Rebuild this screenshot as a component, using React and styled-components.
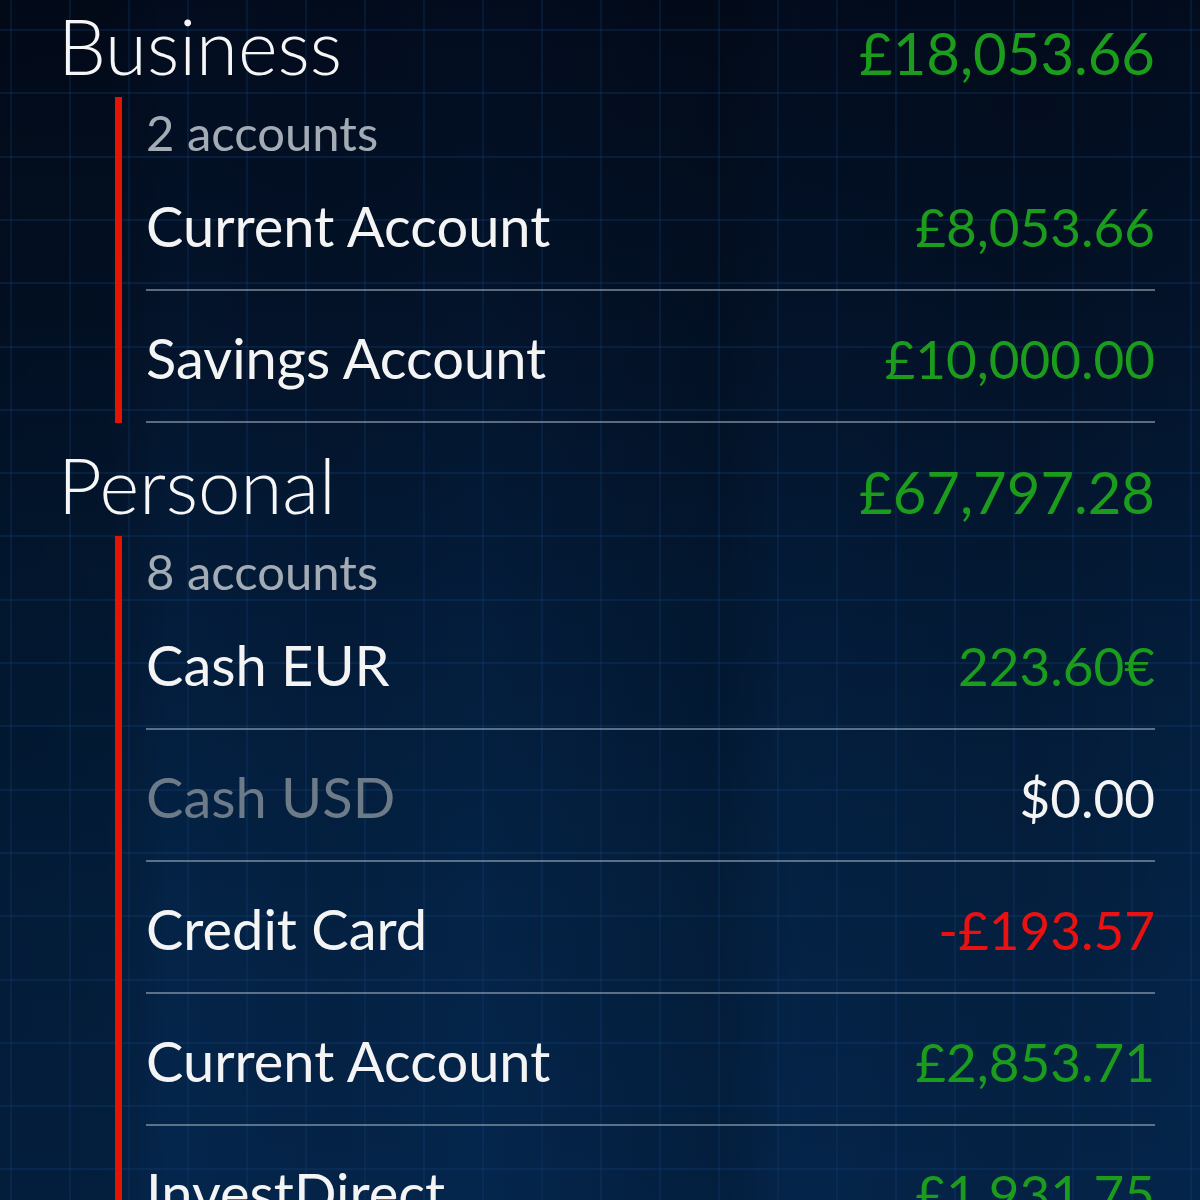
import styled, { createGlobalStyle } from 'styled-components';

const GlobalStyle = createGlobalStyle`
  html, body {
    margin: 0;
    padding: 0;
    height: 1200px;
    overflow: hidden;
  }

  body {
    font-family: Lato, "Open Sans", "DejaVu Sans", sans-serif;
    background-color: #031733;
    background-image:
      repeating-linear-gradient(90deg, transparent 0px, transparent 10px, rgba(18, 66, 124, 0.24) 10px, rgba(18, 66, 124, 0.24) 12px, transparent 12px, transparent 59px),
      repeating-linear-gradient(180deg, transparent 0px, transparent 29px, rgba(18, 66, 124, 0.28) 29px, rgba(18, 66, 124, 0.28) 31px, transparent 31px, transparent 63.3px),
      linear-gradient(90deg, rgba(0, 0, 0, 0.22) 0%, rgba(0, 0, 0, 0.2) 9%, rgba(0, 0, 0, 0) 14%, rgba(0, 0, 0, 0.08) 28%, rgba(0, 0, 0, 0) 40%, rgba(0, 0, 0, 0.2) 60%, rgba(0, 0, 0, 0.04) 66%, rgba(0, 0, 0, 0.12) 86%, rgba(0, 0, 0, 0.02) 100%),
      linear-gradient(180deg, #020c1e 0%, #03132a 25%, #031c3a 50%, #042346 75%, #04264d 100%);
  }
`;

const groups = [
  {
    name: 'Business',
    total: '£18,053.66',
    count: '2 accounts',
    accounts: [
      { name: 'Current Account', amount: '£8,053.66', tone: 'positive' },
      { name: 'Savings Account', amount: '£10,000.00', tone: 'positive' },
    ],
  },
  {
    name: 'Personal',
    total: '£67,797.28',
    count: '8 accounts',
    accounts: [
      { name: 'Cash EUR', amount: '223.60€', tone: 'positive' },
      { name: 'Cash USD', amount: '$0.00', tone: 'zero', muted: true },
      { name: 'Credit Card', amount: '-£193.57', tone: 'negative' },
      { name: 'Current Account', amount: '£2,853.71', tone: 'positive' },
      { name: 'InvestDirect', amount: '£1,931.75', tone: 'positive' },
      { name: 'Mortgage', amount: '£0.00', tone: 'zero' },
    ],
  },
];

const toneColors = {
  positive: '#1c9c1c',
  negative: '#ec1111',
  zero: '#f4f4f4',
};

export default function App() {
  return (
    <>
      <GlobalStyle />
      <AccountList>
        {groups.map((group) => (
          <Group key={group.name}>
            <GroupHeader>
              <GroupName>{group.name}</GroupName>
              <GroupTotal>{group.total}</GroupTotal>
            </GroupHeader>

            {/* accounts under the group, with the red accent bar */}
            <GroupBody>
              <AccountCount>{group.count}</AccountCount>
              {group.accounts.map((account, i) => (
                <AccountRow key={i}>
                  <AccountName $muted={account.muted}>{account.name}</AccountName>
                  <AccountAmount $tone={account.tone}>{account.amount}</AccountAmount>
                </AccountRow>
              ))}
            </GroupBody>
          </Group>
        ))}
      </AccountList>
    </>
  );
}

const AccountList = styled.div`
  display: flex;
  flex-direction: column;
  margin-top: -16px;
  padding: 0 45px 0 58px;
`;

const Group = styled.section`
  display: flex;
  flex-direction: column;
`;

const GroupHeader = styled.div`
  height: 113px;
  box-sizing: border-box;
  padding-top: 24px;

  display: flex;
  flex-direction: row;
  justify-content: space-between;
  align-items: baseline;
`;

const GroupName = styled.div`
  color: #f6f6f6;
  font-size: 76px;
  font-weight: 300;
  line-height: 1;
`;

const GroupTotal = styled.div`
  color: #1c9c1c;
  font-size: 58px;
  font-weight: 400;
  line-height: 1;
`;

const GroupBody = styled.div`
  display: flex;
  flex-direction: column;
  margin-left: 57px;
  padding-left: 24px;
  border-left: 7px solid #e51400;
`;

const AccountCount = styled.div`
  height: 62px;
  box-sizing: border-box;
  padding-top: 11px;

  color: #a3abb4;
  font-size: 49px;
  line-height: 1;
`;

const AccountRow = styled.div`
  height: 132px;
  box-sizing: border-box;
  padding-top: 39px;
  border-bottom: 2px solid rgba(150, 166, 184, 0.6);

  display: flex;
  flex-direction: row;
  justify-content: space-between;
  align-items: baseline;
`;

const AccountName = styled.div`
  color: ${(p) => (p.$muted ? '#6d7b89' : '#f4f4f4')};
  font-size: 56px;
  line-height: 1;
`;

const AccountAmount = styled.div`
  color: ${(p) => toneColors[p.$tone]};
  font-size: 53px;
  line-height: 1;
`;
